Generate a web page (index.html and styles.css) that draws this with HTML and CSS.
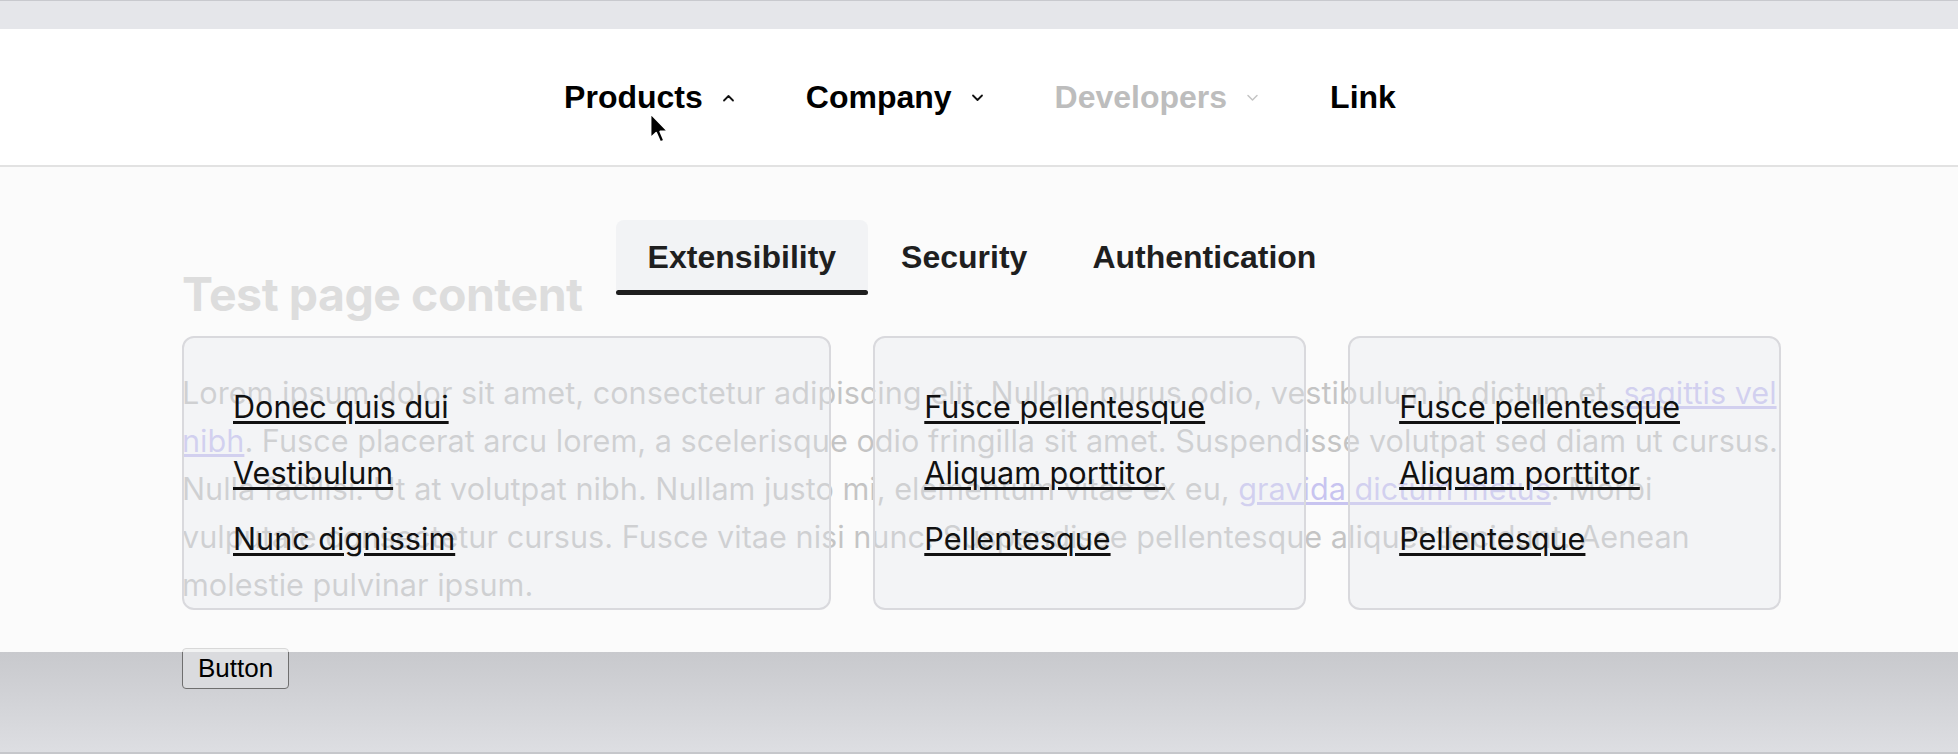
FILE: index.html
```html
<!DOCTYPE html>
<html lang="en">
<head>
<meta charset="utf-8">
<title>Test page</title>
<link rel="stylesheet" href="styles.css">
</head>
<body>
<div class="topbar"></div>
<header class="header">
  <nav class="nav">
    <a class="nav-item">Products
      <svg class="chev" width="13" height="8" viewBox="0 0 13 8"><polyline points="2,6.5 6.5,2 11,6.5" fill="none" stroke="#111" stroke-width="1.8" stroke-linecap="round" stroke-linejoin="round"/></svg>
    </a>
    <a class="nav-item">Company
      <svg class="chev" width="13" height="8" viewBox="0 0 13 8"><polyline points="2,1.5 6.5,6 11,1.5" fill="none" stroke="#111" stroke-width="1.8" stroke-linecap="round" stroke-linejoin="round"/></svg>
    </a>
    <a class="nav-item disabled">Developers
      <svg class="chev" width="13" height="8" viewBox="0 0 13 8"><polyline points="2,1.5 6.5,6 11,1.5" fill="none" stroke="#c4c4c4" stroke-width="1.5" stroke-linecap="round" stroke-linejoin="round"/></svg>
    </a>
    <a class="nav-item">Link</a>
  </nav>
</header>

<main class="content">
  <h1 class="title">Test page content</h1>
  <p class="lorem">Lorem ipsum dolor sit amet, consectetur adipiscing elit. Nullam purus odio, vestibulum in dictum et, <a class="plink">sagittis vel nibh</a>. Fusce placerat arcu lorem, a scelerisque odio fringilla sit amet. Suspendisse volutpat sed diam ut cursus. Nulla facilisi. Ut at volutpat nibh. Nullam justo mi, elementum vitae ex eu, <a class="plink">gravida dictum metus</a>. Morbi vulputate consectetur cursus. Fusce vitae nisi nunc. Suspendisse pellentesque aliquet tincidunt. Aenean molestie pulvinar ipsum.</p>
  <button class="btn">Button</button>
</main>

<div class="backdrop"></div>

<section class="panel">
  <div class="tabs">
    <div class="tab active"><span class="tab-label">Extensibility</span><span class="tab-bar"></span></div>
    <div class="tab"><span class="tab-label">Security</span><span class="tab-bar"></span></div>
    <div class="tab"><span class="tab-label">Authentication</span><span class="tab-bar"></span></div>
  </div>
  <div class="cards">
    <div class="card">
      <a class="card-link">Donec quis dui</a>
      <a class="card-link">Vestibulum</a>
      <a class="card-link">Nunc dignissim</a>
    </div>
    <div class="card">
      <a class="card-link">Fusce pellentesque</a>
      <a class="card-link">Aliquam porttitor</a>
      <a class="card-link">Pellentesque</a>
    </div>
    <div class="card">
      <a class="card-link">Fusce pellentesque</a>
      <a class="card-link">Aliquam porttitor</a>
      <a class="card-link">Pellentesque</a>
    </div>
  </div>
</section>

<svg class="cursor" width="22" height="33" viewBox="0 0 14 21"><path d="M1 1 L1 16.5 L4.6 13.2 L7.2 19.2 L9.6 18.2 L7.1 12.4 L12 12.4 Z" fill="#000" stroke="#fff" stroke-width="1.1" stroke-linejoin="round"/></svg>
</body>
</html>
```

FILE: styles.css
```css
* { box-sizing: border-box; }

html, body {
  margin: 0;
  padding: 0;
  height: 754px;
  overflow: hidden;
}

body {
  position: relative;
  background: #fff;
  font-family: Inter, "Noto Sans", sans-serif;
}

.topbar {
  height: 29px;
  background: #e5e6ea;
  border-top: 1px solid #c8c9ce;
}

.header {
  position: relative;
  z-index: 4;
  height: 138px;
  background: #fff;
  border-bottom: 2px solid #e2e2e2;
  display: flex;
  justify-content: center;
  align-items: center;
}

.nav {
  display: flex;
  align-items: center;
  gap: 71px;
  margin-left: 2px;
}

.nav-item {
  display: flex;
  align-items: center;
  gap: 19px;
  font-family: "Liberation Sans", Arial, sans-serif;
  font-weight: 700;
  font-size: 32px;
  color: #000;
  cursor: pointer;
}

.nav-item.disabled { color: #bdbdbd; }

.chev { display: block; margin-top: 2px; }

.content {
  margin-left: 182px;
  width: 1599px;
  padding-top: 98px;
}

.title {
  margin: 0;
  font-size: 46.5px;
  line-height: 58px;
  font-weight: 700;
  color: #838383;
  letter-spacing: -0.5px;
}

.lorem {
  margin: 46px 0 0;
  font-size: 30.65px;
  line-height: 48px;
  color: #1c1c1c;
}

.plink {
  color: #2b1bd1;
  text-decoration: underline;
}

.btn {
  position: relative;
  z-index: 2;
  margin-top: 39px;
  height: 41px;
  padding: 0 15px;
  font-family: "Liberation Sans", Arial, sans-serif;
  font-size: 26px;
  color: #000;
  background: #dadbde;
  border: 1px solid #6f6f6f;
  border-radius: 4px;
}

.backdrop {
  position: absolute;
  z-index: 1;
  left: 0;
  right: 0;
  top: 652px;
  height: 102px;
  background: linear-gradient(to bottom, #c8c9cd, #dddee2);
  border-bottom: 2px solid #c6c7cb;
}

.panel {
  position: absolute;
  z-index: 3;
  left: 0;
  right: 0;
  top: 167px;
  height: 485px;
  background: rgba(250, 250, 250, 0.76);
  padding-top: 53px;
}

.tabs {
  display: flex;
  justify-content: center;
  gap: 1px;
  margin-left: 6px;
}

.tab {
  display: flex;
  flex-direction: column;
  height: 75px;
  border-radius: 8px 8px 0 0;
  font-family: "Liberation Sans", Arial, sans-serif;
  font-weight: 700;
  font-size: 32px;
  color: #1f1f1f;
}

.tab.active { background: #f2f3f5; }

.tab-label {
  flex: 1;
  display: flex;
  align-items: center;
  padding: 4px 32px 0;
}

.tab-bar {
  height: 5px;
  border-radius: 3px;
}

.tab.active .tab-bar { background: #1e1e1e; }

.cards {
  display: grid;
  grid-template-columns: 3fr 2fr 2fr;
  gap: 42px;
  margin: 41px 0 0 182px;
  width: 1599px;
}

.card {
  display: flex;
  flex-direction: column;
  align-items: flex-start;
  gap: 26px;
  height: 274px;
  padding: 49px 49px;
  background: rgba(228, 231, 237, 0.35);
  border: 2px solid #d9d9dd;
  border-radius: 12px;
}

.card-link {
  font-size: 30.6px;
  line-height: 40px;
  color: #111;
  text-decoration: underline;
  text-underline-offset: 3px;
  cursor: pointer;
}

.cursor {
  position: absolute;
  z-index: 5;
  left: 649px;
  top: 112px;
}
```
